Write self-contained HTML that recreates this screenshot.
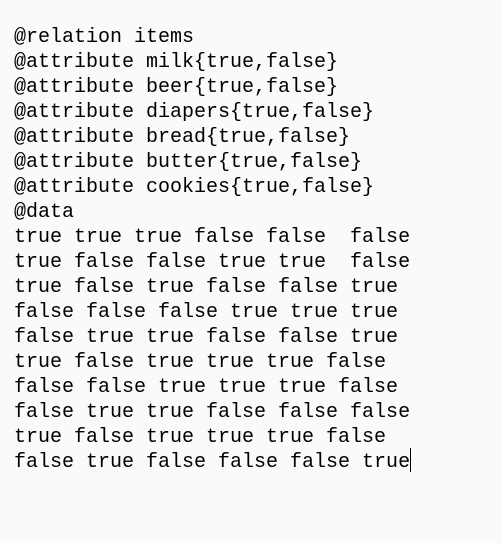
<!DOCTYPE html>
<html><head><meta charset="utf-8"><style>
html,body{margin:0;padding:0;background:#fafafa;width:501px;height:543px;overflow:hidden}
pre{position:absolute;left:14px;top:25px;margin:0;font-family:"Liberation Mono",monospace;font-size:20px;line-height:25px;color:#000}
.c{position:absolute;left:410px;top:448px;width:1px;height:24px;background:#000}
</style></head><body>
<pre>@relation items
@attribute milk{true,false}
@attribute beer{true,false}
@attribute diapers{true,false}
@attribute bread{true,false}
@attribute butter{true,false}
@attribute cookies{true,false}
@data
true true true false false  false
true false false true true  false
true false true false false true
false false false true true true
false true true false false true
true false true true true false
false false true true true false
false true true false false false
true false true true true false
false true false false false true</pre>
<div class="c"></div>
</body></html>
